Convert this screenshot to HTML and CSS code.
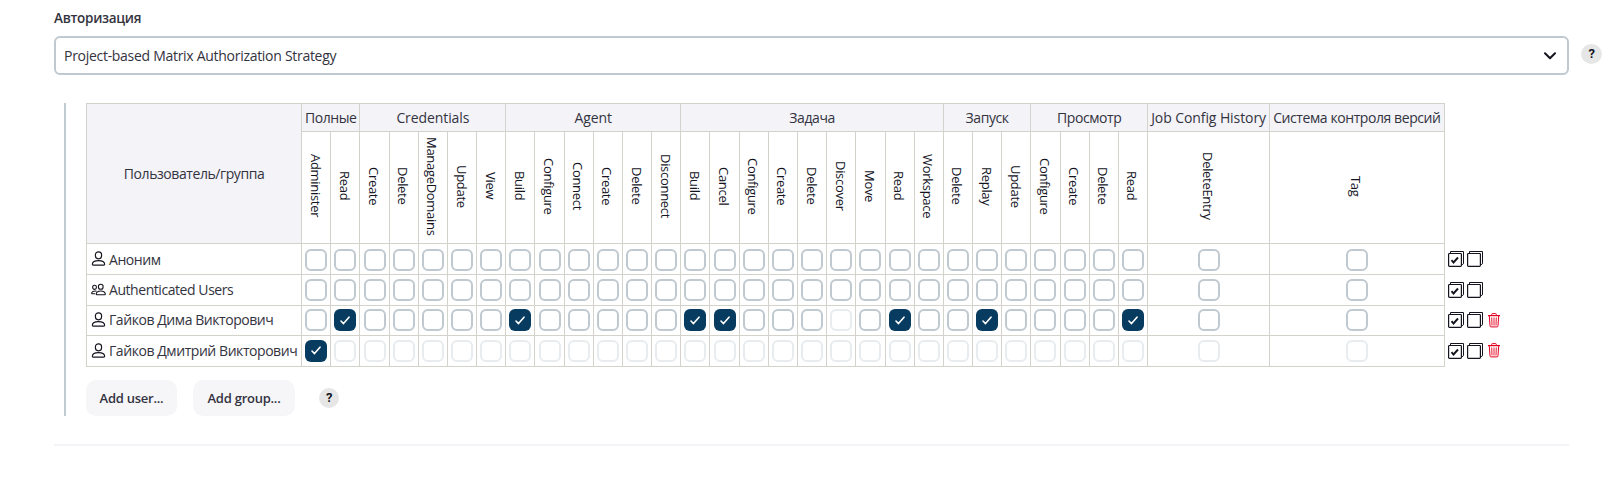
FILE: index.html
```html
<!DOCTYPE html>
<html lang="ru">
<head>
<meta charset="utf-8">
<title>Авторизация</title>
<link rel="stylesheet" href="styles.css">
</head>
<body>
<svg class="defs" width="0" height="0">
  <symbol id="user" viewBox="0 0 14 15"><g fill="none" stroke="currentColor" stroke-width="1.15"><rect x="3.9" y=".8" width="6.2" height="7" rx="3"/><path d="M.8 13.2C1 10.8 3.400 9.600 7 9.600s6 1.200 6.200 3.600c0 .7-.4.900-.9.900H1.700c-.5 0-.9-.2-.9-.9z"/></g></symbol>
  <symbol id="users" viewBox="0 0 15 12"><g fill="none" stroke="currentColor" stroke-width="1.100"><rect x="7.400" y=".7" width="4.700" height="5" rx="2.300"/><rect x="1.700" y="1.700" width="3.700" height="4.200" rx="1.800"/><path d="M5.200 10.500c.2-2.200 2-3 4.500-3s4.400.8 4.600 3c0 .5-.2.700-.7.700H5.900c-.5 0-.7-.2-.7-.7zM5.600 7.700C2.500 7.200.8 8 .6 9.800c0 .3.200.5.500.5h3"/></g></symbol>
  <symbol id="stack" viewBox="0 0 16 16"><path d="M2.500 2V.5h13v12.200L13.600 14" fill="none" stroke="currentColor"/><rect x=".6" y="2.500" width="12.800" height="12.900" rx=".8" fill="#fff" stroke="currentColor" stroke-width="1.200"/></symbol>
  <symbol id="trash" viewBox="0 0 12 15"><g fill="none" stroke="currentColor"><path d="M0 2.600h12" stroke-width="1.200"/><path d="M3.700 2.400V1.300c0-.5.300-.7.700-.7h3.200c.4 0 .7.200.7.700v1.100M1.300 3l.7 9.800c0 .8.500 1.100 1.100 1.100h5.800c.6 0 1.100-.3 1.100-1.100l.7-9.800"/><path d="M3.700 4.500l.3 8M6 4.500v8M8.300 4.500l-.3 8" stroke-width=".9"/></g></symbol>
</svg>
<main class="page">
  <div class="label">Авторизация</div>
  <div class="strategy">
    <div class="select"><span>Project-based Matrix Authorization Strategy</span>
      <svg width="12" height="8" viewBox="0 0 12 8"><path d="M1 1.300l5 5 5-5" fill="none" stroke="#14141f" stroke-width="2" stroke-linecap="round" stroke-linejoin="round"/></svg>
    </div>
    <div class="help">?</div>
  </div>
  <section class="block">
    <div class="table">
      <div class="matrix" id="matrix"></div>
      <div class="actions" id="actions"></div>
    </div>
    <div class="buttons">
      <button class="btn user-btn">Add user...</button>
      <button class="btn group-btn">Add group...</button>
      <div class="help small">?</div>
    </div>
  </section>
  <div class="rule"></div>
</main>
<script src="matrix.js"></script>
</body>
</html>
```
FILE: styles.css
```css
* { box-sizing: border-box; }
body { margin: 0; background: #fff; color: #14141f; font: 14px/20px "Open Sans", "Noto Sans", sans-serif; letter-spacing: -.29px; }
.defs { position: absolute; }
.page { padding: 8px 16px 0 54px; height: 480px; overflow: hidden; }
.label { height: 28px; font-size: 13.500px; font-weight: 600; color: #333340; }
.strategy { display: flex; gap: 12px; }
.select { width: 1515px; height: 39px; border: 2px solid #bfc9cf; border-radius: 6px; display: flex; align-items: center; justify-content: space-between; padding: 0 11px 0 8px; color: #333340; }
.help { width: 21px; height: 20px; margin-top: 8px; border-radius: 50%; background: #e6e6e6; font: 700 13px/19px Roboto, sans-serif; text-align: center; }
.help.small { width: 20px; margin: 0 0 0 24px; }
.block { margin: 28px 0 0 10px; height: 313px; border-left: 2px solid #bfcbd0; padding-left: 20px; }
.table { display: flex; gap: 3px; }
.matrix { display: grid; width: 1359px; grid-template-columns: 215.080px repeat(29, 29.182px) 122px 174.640px; grid-template-rows: 28px 112px 31px 31px 30px 31px; border-right: 1px solid #d3d3cb; border-bottom: 1px solid #d3d3cb; }
.cell { border-left: 1px solid #d3d3cb; border-top: 1px solid #d3d3cb; display: flex; align-items: center; justify-content: center; white-space: nowrap; min-width: 0; color: #333340; letter-spacing: -.42px; }
.head { background: #f3f3f8; }
.latin { letter-spacing: -.09px; }
.corner { grid-row: span 2; }
.vertical { font-size: 13px; letter-spacing: -.3px; color: #14141f; }
.vertical span { writing-mode: vertical-rl; line-height: 20px; margin: 0 1px 3px 0; }
.name { justify-content: flex-start; gap: 3px; padding-left: 4px; letter-spacing: -.44px; }
.name svg { width: 15px; height: 15px; flex: none; margin-top: -2px; color: #14141f; }
.name span { margin-top: -1px; }
.name.lowered span { margin-top: 1px; }
.box { width: 22px; height: 22px; margin-top: -1px; border: 2px solid #bfc9cf; border-radius: 6px; display: flex; align-items: center; justify-content: center; }
.lowered .box { margin-top: 1px; }
.box.off { border-color: #e8ecef; }
.box.on { border: 0; background: #073b5f; }
.actions { display: grid; grid-template-rows: 31px 31px 30px 31px; padding-top: 140px; }
.tools { display: flex; gap: 3px; align-items: center; color: #14141f; }
.tools .bin { color: #e6001f; margin-left: 2px; }
.buttons { display: flex; align-items: center; gap: 16px; margin-top: 13px; }
.btn { height: 36px; border: 0; border-radius: 10px; background: #f6f6f9; color: #333340; padding: 0 0 1px; font: 600 13px/20px "Open Sans", "Noto Sans", sans-serif; letter-spacing: -.25px; }
.user-btn { width: 91px; }
.group-btn { width: 102px; }
.buttons .help { margin-left: 8px; }
.rule { width: 1515px; height: 2px; margin-top: 28px; background: #f3f3f8; }
```
FILE: matrix.js
```js
const groups = [
  ['Полные', ['Administer', 'Read']],
  ['Credentials', ['Create', 'Delete', 'ManageDomains', 'Update', 'View']],
  ['Agent', ['Build', 'Configure', 'Connect', 'Create', 'Delete', 'Disconnect']],
  ['Задача', ['Build', 'Cancel', 'Configure', 'Create', 'Delete', 'Discover', 'Move', 'Read', 'Workspace']],
  ['Запуск', ['Delete', 'Replay', 'Update']],
  ['Просмотр', ['Configure', 'Create', 'Delete', 'Read']],
  ['Job Config History', ['DeleteEntry']],
  ['Система контроля версий', ['Tag']]
];
const rows = [
  { name: 'Аноним', icon: 'user', on: [], off: [], lowered: true },
  { name: 'Authenticated Users', icon: 'users', on: [], off: [] },
  { name: 'Гайков Дима Викторович', icon: 'user', on: [1, 7, 13, 14, 20, 23, 28], off: [18], bin: true },
  { name: 'Гайков Дмитрий Викторович', icon: 'user', on: [0], allOff: true, off: [], bin: true }
];
const tick = '<svg width="10" height="9" viewBox="0 0 10 9"><path d="M1 5l2.500 2.600L9 1.200" fill="none" stroke="#fff" stroke-width="1.600" stroke-linecap="round" stroke-linejoin="round"/></svg>';
let html = '<div class="cell head corner"><span>Пользователь/группа</span></div>';
groups.forEach(([title, items]) => {
  const latin = /^[A-Z]/.test(title) ? ' latin' : '';
  html += `<div class="cell head${latin}" style="grid-column: span ${items.length}"><span>${title}</span></div>`;
});
const permissions = groups.flatMap(g => g[1]);
permissions.forEach(p => { html += `<div class="cell vertical"><span>${p}</span></div>`; });
let tools = '';
rows.forEach(row => {
  const lowered = row.lowered ? ' lowered' : '';
  html += `<div class="cell name${lowered}"><svg><use href="#${row.icon}"/></svg><span>${row.name}</span></div>`;
  permissions.forEach((p, i) => {
    const on = row.on.includes(i);
    const state = on ? 'on' : row.allOff || row.off.includes(i) ? 'off' : '';
    html += `<div class="cell${lowered}"><div class="box ${state}">${on ? tick : ''}</div></div>`;
  });
  tools += '<div class="tools"><svg width="16" height="16"><use href="#stack"/><path d="M3.500 9.200l2 2.300 4.500-5" fill="none" stroke="#14141f" stroke-width="1.900"/></svg><svg width="16" height="16"><use href="#stack"/></svg>'
    + (row.bin ? '<svg class="bin" width="12" height="15"><use href="#trash"/></svg>' : '') + '</div>';
});
document.getElementById('matrix').innerHTML = html;
document.getElementById('actions').innerHTML = tools;
```
